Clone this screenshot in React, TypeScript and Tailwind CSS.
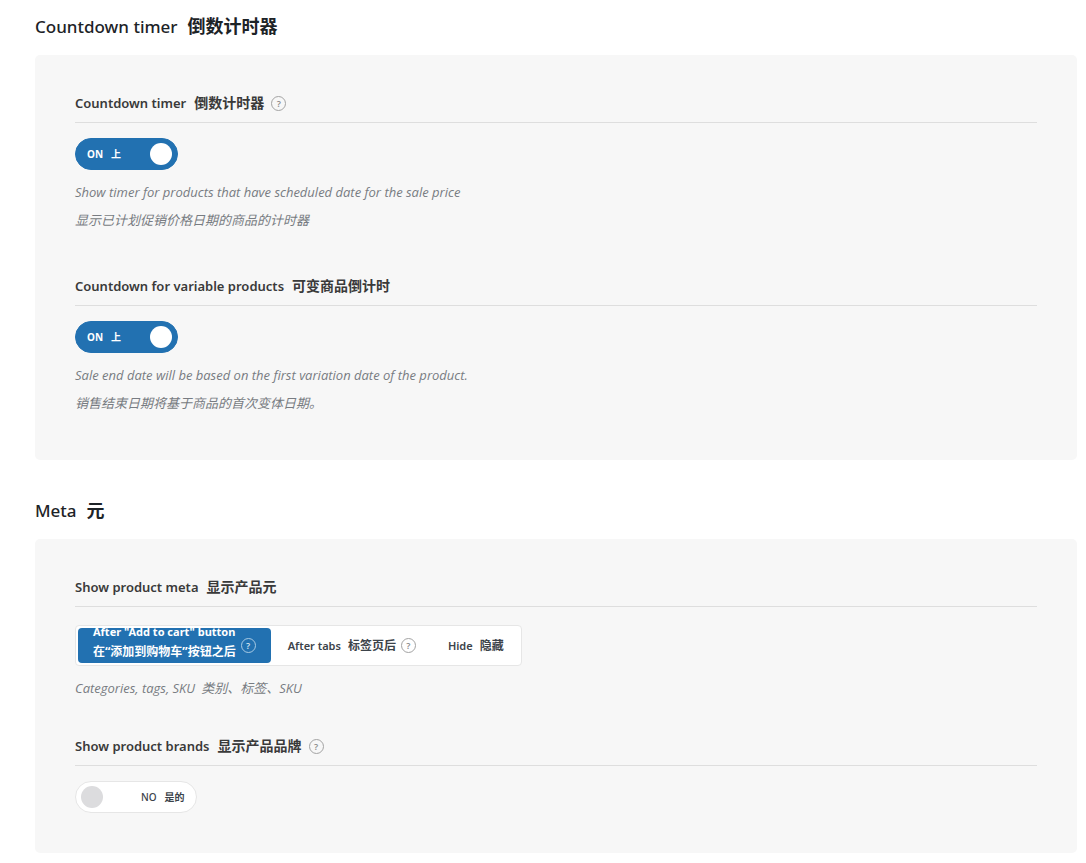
import { useState, type ReactNode } from "react";

function Help({ light = false }: { light?: boolean }) {
  return (
    <button
      type="button"
      aria-label="Help"
      className={
        "flex size-[15px] shrink-0 items-center justify-center rounded-full border text-[9px] leading-none font-semibold " +
        (light ? "border-[#a9cae3] text-[#d3e3f0]" : "border-[#a3a3a3] text-[#8c8c8c]")
      }
    >
      ?
    </button>
  );
}

function Section({ title, zh, children }: { title: string; zh: string; children: ReactNode }) {
  return (
    <section>
      <h2 className="flex h-6 items-baseline gap-[10px] leading-6 text-[#1d2327]">
        <span className="text-[17px] font-medium">{title}</span>
        <span className="text-[18px] font-bold">{zh}</span>
      </h2>
      <div className="mt-[17px] rounded-[5px] bg-[#f7f7f7] px-10 pt-[38px] pb-10">{children}</div>
    </section>
  );
}

function FieldTitle({ title, zh, help = false }: { title: string; zh: string; help?: boolean }) {
  return (
    <div className="flex h-[30px] items-start gap-[7px] border-b border-[#dedede]">
      <h3 className="flex h-5 items-baseline gap-2 leading-5 text-[#3a3a3a]">
        <span className="text-[13px] font-semibold">{title}</span>
        <span className="text-[14px] font-bold">{zh}</span>
      </h3>
      {help && (
        <span className="flex h-5 items-center">
          <Help />
        </span>
      )}
    </div>
  );
}

function Switch({ label, initial }: { label: string; initial: boolean }) {
  const [on, setOn] = useState(initial);
  return (
    <label
      className={
        "relative mt-[15px] flex h-8 w-fit cursor-pointer items-center rounded-full border text-[10px] leading-4 " +
        (on
          ? "border-[#2271b1] bg-[#2271b1] pr-[5px] pl-[11px] font-bold text-white"
          : "flex-row-reverse border-[#e6e6e6] bg-white pr-[11px] pl-[5px] font-medium text-[#3c434a]")
      }
    >
      <input
        type="checkbox"
        role="switch"
        aria-label={label}
        checked={on}
        onChange={(e) => setOn(e.target.checked)}
        className="sr-only"
      />
      <span className={on ? "mr-[29px] flex gap-2" : "ml-[38px] flex gap-2"}>
        <span>{on ? "ON" : "NO"}</span>
        <span className="font-bold">{on ? "上" : "是的"}</span>
      </span>
      <span className={"size-[22px] rounded-full " + (on ? "bg-white" : "bg-[#dcdcde]")} />
    </label>
  );
}

function Description({ children }: { children: ReactNode }) {
  return (
    <div className="mt-2 pb-[3px] font-['Open_Sans','Noto_Sans_CJK_SC',sans-serif] text-[13px] leading-7 text-[#787c82] italic">
      {children}
    </div>
  );
}

function Option({
  value,
  current,
  onSelect,
  help = false,
  children,
}: {
  value: string;
  current: string;
  onSelect: (value: string) => void;
  help?: boolean;
  children: ReactNode;
}) {
  const active = value === current;
  return (
    <label
      className={
        "relative flex h-[35px] cursor-pointer items-center gap-[5px] overflow-hidden rounded-[4px] px-[15px] leading-5 " +
        (active ? "bg-[#2271b1] text-white" : "text-[#3c434a]")
      }
    >
      <input
        type="radio"
        name="product-meta"
        value={value}
        checked={active}
        onChange={() => onSelect(value)}
        className="sr-only"
      />
      {children}
      {help && <Help light={active} />}
    </label>
  );
}

export default function App() {
  const [meta, setMeta] = useState("button");
  return (
    <main className="flex flex-col gap-[38px] bg-white pt-[14px] pr-[9px] pb-[10px] pl-[35px] font-['Noto_Sans','Noto_Sans_CJK_SC',sans-serif]">
      <Section title="Countdown timer" zh="倒数计时器">
        <div className="flex flex-col gap-[39px]">
          <div>
            <FieldTitle title="Countdown timer" zh="倒数计时器" help />
            <Switch label="Countdown timer" initial />
            <Description>
              <p>Show timer for products that have scheduled date for the sale price</p>
              <p>显示已计划促销价格日期的商品的计时器</p>
            </Description>
          </div>
          <div>
            <FieldTitle title="Countdown for variable products" zh="可变商品倒计时" />
            <Switch label="Countdown for variable products" initial />
            <Description>
              <p>Sale end date will be based on the first variation date of the product.</p>
              <p>销售结束日期将基于商品的首次变体日期。</p>
            </Description>
          </div>
        </div>
      </Section>

      <Section title="Meta" zh="元">
        <div className="flex flex-col gap-[31px]">
          <div>
            <FieldTitle title="Show product meta" zh="显示产品元" />
            <div
              role="radiogroup"
              aria-label="Show product meta"
              className="mt-[18px] flex w-fit gap-[2px] rounded-[4px] border border-[#e6e6e6] bg-white p-[2px]"
            >
              <Option value="button" current={meta} onSelect={setMeta} help>
                <span className="pb-[7px]">
                  <span className="block text-[11px] font-bold">After "Add to cart" button</span>
                  <span className="block text-[12px] font-bold">在“添加到购物车”按钮之后</span>
                </span>
              </Option>
              <Option value="tabs" current={meta} onSelect={setMeta} help>
                <span className="flex items-baseline gap-[7px]">
                  <span className="text-[11px] font-semibold">After tabs</span>
                  <span className="text-[12px] font-bold">标签页后</span>
                </span>
              </Option>
              <Option value="hide" current={meta} onSelect={setMeta}>
                <span className="flex items-baseline gap-[7px]">
                  <span className="text-[11px] font-semibold">Hide</span>
                  <span className="text-[12px] font-bold">隐藏</span>
                </span>
              </Option>
            </div>
            <Description>
              <p className="flex gap-[6px]">
                <span>Categories, tags, SKU</span>
                <span>类别、标签、SKU</span>
              </p>
            </Description>
          </div>
          <div>
            <FieldTitle title="Show product brands" zh="显示产品品牌" help />
            <Switch label="Show product brands" initial={false} />
          </div>
        </div>
      </Section>
    </main>
  );
}
